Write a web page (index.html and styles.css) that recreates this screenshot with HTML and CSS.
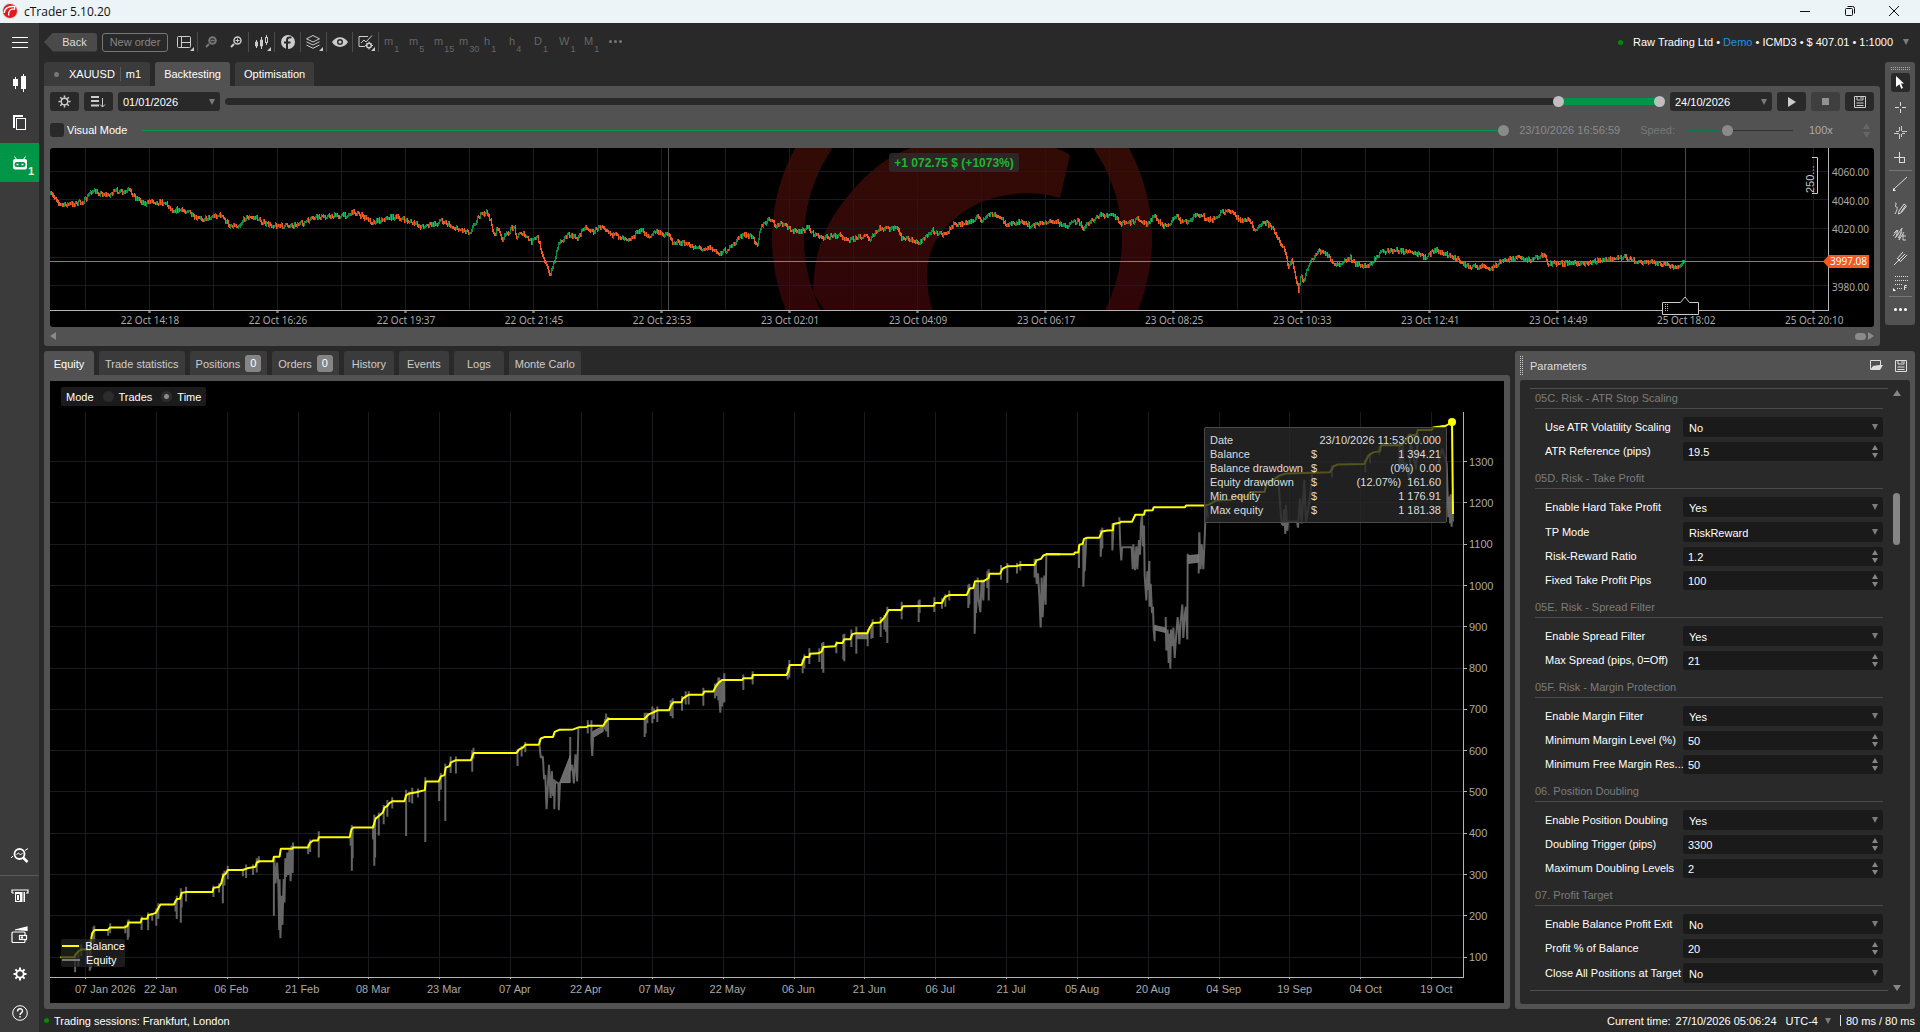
FILE: index.html
```html
<!DOCTYPE html>
<html lang="en">
<head>
<meta charset="utf-8">
<title>cTrader 5.10.20</title>
<link rel="stylesheet" href="styles.css">
</head>
<body>
<header class="titlebar">
  <svg class="logo" width="16" height="16" viewBox="0 0 16 16"><circle cx="8" cy="8" r="8" fill="#d9dcdd"/><circle cx="8" cy="8" r="7" fill="#e11b1b"/><path d="M2.2 10C2.4 5.4 6 3 12.8 3.600L12.500 6.200C8.500 5.500 6.300 7.500 6.600 12.500" fill="none" stroke="#fff" stroke-width="1.300"/></svg>
  <h1>cTrader 5.10.20</h1>
  <div class="window-buttons">
    <button aria-label="Minimise"><svg width="12" height="12" viewBox="0 0 12 12"><path d="M1 6.500H11" stroke="#111"/></svg></button>
    <button aria-label="Restore"><svg width="12" height="12" viewBox="0 0 12 12" fill="none" stroke="#111"><rect x="1.500" y="3.500" width="7" height="7" rx="1"/><path d="M3.500 1.500H8.500Q10.500 1.500 10.500 3.500V8.500"/></svg></button>
    <button aria-label="Close"><svg width="12" height="12" viewBox="0 0 12 12"><path d="M1 1L11 11M11 1L1 11" stroke="#111"/></svg></button>
  </div>
</header>
<div class="app">
  <nav class="sidebar">
    <button aria-label="Menu"><svg width="16" height="14" viewBox="0 0 16 14"><path d="M0 1.500H16M0 6.500H16M0 11.500H16" stroke="#fff"/></svg></button>
    <button aria-label="Trade"><svg width="14" height="18" viewBox="0 0 14 18" fill="#fff"><path d="M0 5H5V12H0zM2 3H3V15H2zM8 2H13V15H8zM10 0H11V18H10z"/></svg></button>
    <button aria-label="Copy"><svg width="14" height="16" viewBox="0 0 14 16" fill="none" stroke="#fff"><path d="M1 13V1H10" stroke-width="2"/><rect x="3.500" y="3.500" width="9" height="11"/></svg></button>
    <button class="active" aria-label="Algo"><svg width="14" height="14" viewBox="0 0 14 14"><path d="M1.500 .5L4 4M12.500 .5L10 4" stroke="#fff"/><rect y="3" width="14" height="10.500" rx="2" fill="#fff"/><rect x="1.500" y="6" width="11" height="5" rx="2.500" fill="#009547"/><path d="M3.500 8.500H5.500M8.500 8.500H10.500" stroke="#fff" stroke-width="1.500"/></svg><span class="count">1</span></button>
    <button class="push" aria-label="Analyze"><svg width="18" height="16" viewBox="0 0 18 16" fill="none" stroke="#fff"><circle cx="8.500" cy="7" r="5" stroke-width="1.800"/><path d="M12 10.500L16.500 15" stroke-width="2.500"/><path d="M5.500 7.500L7.500 6L9.500 8L11.500 6M2 9L0 11M14 3.500L17 1.500"/></svg></button>
    <hr>
    <button aria-label="Deposit"><svg width="18" height="14" viewBox="0 0 18 14"><path d="M1 4V1H17V4H15M1 4H3" fill="none" stroke="#fff" stroke-width="1.200"/><path d="M4 3H14V13H4z" fill="#fff"/><path d="M5.500 5.500H8.500V11.500H5.500zM12 3V13" fill="none" stroke="#3b3b3b"/></svg></button>
    <button aria-label="Wallet"><svg width="18" height="18" viewBox="0 0 18 18" fill="none" stroke="#fff" stroke-width="1.200"><path d="M4 4L16 1V5" fill="#fff"/><rect x="1" y="6" width="13" height="10.500" rx="1"/><rect x="8.500" y="9.500" width="7" height="4" fill="#3b3b3b"/><circle cx="11" cy="11.500" r=".6"/></svg></button>
    <button aria-label="Settings"><svg width="14" height="14" viewBox="-7 -7 14 14" fill="none" stroke="#fff"><circle r="3.700" stroke-width="1.800"/><path d="M0-6.500V-4M0 6.500V4M-6.500 0H-4M6.500 0H4M-4.600-4.600L-3-3M4.600 4.600L3 3M-4.600 4.600L-3 3M4.600-4.600L3-3" stroke-width="2"/></svg></button>
    <button aria-label="Help"><svg width="16" height="16" viewBox="0 0 16 16" fill="none" stroke="#fff"><circle cx="8" cy="8" r="7.300"/><path d="M5.500 6.500C5.500 3 10.500 3 10.500 6C10.500 8 8 7.800 8 10M8 11V12.500" stroke-width="1.400"/></svg></button>
  </nav>
  <div class="workspace">
    <div class="toolbar">
      <button class="back">Back</button>
      <button class="new-order">New order</button>
      <div class="tools">
        <button aria-label="Layout" class="more"><svg width="15" height="14" viewBox="0 0 15 14" fill="none" stroke="#ccc"><rect x=".5" y="1.500" width="13" height="11" rx="1"/><path d="M4.500 1V13M4.500 7.500H14"/></svg></button>
        <button aria-label="Zoom out" class="dim"><svg width="12" height="12" viewBox="0 0 12 12" stroke="#777" fill="none"><path d="M1 11L4 8" stroke-width="2"/><circle cx="7.500" cy="4.500" r="3.300" stroke-width="2"/><path d="M5.500 4.500H9.500" stroke-width="1.500"/></svg></button>
        <button aria-label="Zoom in" class="plain"><svg width="12" height="12" viewBox="0 0 12 12" stroke="#ccc" fill="none"><path d="M1 11L4 8" stroke-width="2"/><circle cx="7.500" cy="4.500" r="3.500" stroke-width="1.500"/><path d="M5.500 4.500H9.500M7.500 2.500V6.500"/></svg></button>
        <button aria-label="Chart type" class="more"><svg width="14" height="14" viewBox="0 0 14 14" fill="none" stroke="#ccc"><path d="M1.500 5V13M6.500 2V14M11.500 0V2M11.500 7V10"/><path d="M.5 7H2.500V11H.5zM5.500 5H7.500V11H5.500z" fill="#ccc"/><rect x="10.500" y="2.500" width="2" height="5"/></svg></button>
        <button aria-label="Indicators"><svg width="14" height="14" viewBox="0 0 14 14"><circle cx="7" cy="7" r="7" fill="#ccc"/><path d="M6 14V5.500C6 3 7 2 10.500 2.500M3 7.500H9.500" fill="none" stroke="#292929" stroke-width="2"/></svg></button>
        <button aria-label="Objects" class="more"><svg width="15" height="14" viewBox="0 0 15 14" fill="none" stroke="#ccc"><path d="M7 .5L13.500 3.800L7 7L.5 3.800zM.5 6.800L7 10L13.500 6.800M.5 10L7 13.300L13.500 10"/></svg></button>
        <button aria-label="Visibility"><svg width="16" height="10" viewBox="0 0 16 10"><path d="M0 5C4-1.500 12-1.500 16 5C12 11.500 4 11.500 0 5z" fill="#ccc"/><circle cx="8" cy="5" r="3" fill="#292929"/><circle cx="8" cy="5" r="1.600" fill="#ccc"/></svg></button>
        <button aria-label="Chart settings" class="more"><svg width="16" height="15" viewBox="0 0 16 15" fill="none" stroke="#ccc"><path d="M7 11.500H1V1.500H10M3 8L6 5L8 7L14 .5"/><circle cx="11" cy="10.500" r="2.300" stroke-width="1.500"/><path d="M11 6.500V8M11 13V14.500M7 10.500H8.500M13.500 10.500H15M8.500 8L9.500 9M13.500 8L12.500 9"/></svg></button>
      </div>
      <div class="frames">
        <button>m<sub>1</sub></button><button>m<sub>5</sub></button><button>m<sub>15</sub></button><button>m<sub>30</sub></button><button>h<sub>1</sub></button><button>h<sub>4</sub></button><button>D<sub>1</sub></button><button>W<sub>1</sub></button><button>M<sub>1</sub></button>
        <button aria-label="More periods" class="dots"><i></i><i></i><i></i></button>
      </div>
      <button class="account"><i class="live"></i><span>Raw Trading Ltd • <b>Demo</b> • ICMD3 • $ 407.01 • 1:1000</span><i class="caret"></i></button>
    </div>
    <div class="upper">
      <section class="backtest">
        <div class="tabs top-tabs">
          <button class="symbol"><i class="dot"></i>XAUUSD<i class="bar"></i>m1</button>
          <button class="selected">Backtesting</button>
          <button>Optimisation</button>
        </div>
        <div class="backtest-body">
          <div class="range-row">
            <button class="tool" aria-label="Backtest settings"><svg width="13" height="13" viewBox="-7 -7 14 14" fill="none" stroke="#ccc"><circle r="3.500" stroke-width="1.500"/><path d="M0-6.500V-4M0 6.500V4M-6.500 0H-4M6.500 0H4M-4.600-4.600L-3-3M4.600 4.600L3 3M-4.600 4.600L-3 3M4.600-4.600L3-3" stroke-width="1.700"/></svg></button>
            <button class="tool" aria-label="Events order"><svg width="15" height="12" viewBox="0 0 15 12" fill="none" stroke="#ccc"><path d="M0 1H8M0 5H8M0 9.500H8" stroke-width="2"/><path d="M11.500 2V11M9 8.500L11.500 11L14 8.500"/></svg></button>
            <div class="pick date"><select aria-label="Start date"><option>01/01/2026</option></select></div>
            <div class="period">
              <input type="range" aria-label="Period start" min="0" max="1000" value="929">
              <input type="range" aria-label="Period end" min="0" max="1000" value="1000">
            </div>
            <div class="pick date"><select aria-label="End date"><option>24/10/2026</option></select></div>
            <button class="tool" aria-label="Start"><svg width="8" height="10" viewBox="0 0 8 10"><path d="M0 0L8 5L0 10z" fill="#ccc"/></svg></button>
            <button class="tool off" aria-label="Stop" disabled><svg width="7" height="7"><rect width="7" height="7" fill="#929292"/></svg></button>
            <button class="tool" aria-label="Save"><svg width="12" height="12" viewBox="0 0 12 12" fill="none" stroke="#ccc"><path d="M.5.5H11.500V11.500H.5zM3 .5V4H9V.5M2.500 7H9.500M2.500 9.500H9.500"/><path d="M7 1V3"/></svg></button>
          </div>
          <div class="visual-row">
            <label class="check"><input type="checkbox">Visual Mode</label>
            <input class="progress" type="range" aria-label="Progress" min="0" max="100" value="100" disabled>
            <span class="stamp">23/10/2026 16:56:59</span>
            <label class="speed" for="speed">Speed:</label>
            <input class="speed-range" id="speed" type="range" min="0" max="100" value="38" disabled>
            <span class="times">100x</span>
            <span class="steps"></span>
          </div>
          <div class="price-chart">
            <svg class="price-plot" viewBox="50 148 1779 164" preserveAspectRatio="none">
              <defs>
                <linearGradient id="brand" gradientUnits="userSpaceOnUse" x1="0" y1="148" x2="0" y2="310"><stop offset="0" stop-color="#330b05"/><stop offset="1" stop-color="#2f0508"/></linearGradient>
                <clipPath id="plot"><rect x="50" y="148" width="1779" height="162"/></clipPath>
              </defs>
              <g clip-path="url(#plot)" fill="url(#brand)">
                <path fill-rule="evenodd" d="M772 239a190 190 0 1 0 380 0a190 190 0 1 0-380 0zM804 239a159 159 0 1 1 318 0a159 159 0 1 1-318 0z"/>
                <path d="M813 292C814 255 822 225 853 190C872 168 893 153 917 146C970 130 1030 132 1070 155L1060 198C1035 190 1005 193 984 201C945 218 927 245 927 275C927 288 929 299 933 311L830 320z"/>
              </g>
              <path id="price-grid" class="grid"/>
              <path d="M668.500 148V310M1685.500 148V310" class="marker-line"/>
              <path id="price-up" stroke="#0a8f43"/>
              <path id="price-down" stroke="#f15a22"/>
              <path d="M50 261.500H1829" stroke="#f15a22"/>
              <path id="price-axis" class="axis"/>
              <path d="M1662.500 302.500H1680.500L1685 297L1689.500 302.500H1698.500V314.500H1662.500z" fill="#000" stroke="#ccc"/>
              <path d="M1665.500 304V312M1667.500 304V312" stroke="#bbb" stroke-dasharray="1 1"/>
              <path d="M1812 157.500H1817.500V193.500H1812" fill="none" stroke="#ccc"/>
            </svg>
            <div class="price-scale"><span>4060.00</span><span>4040.00</span><span>4020.00</span><span></span><span>3980.00</span></div>
            <div class="price-dates"><span>22 Oct 14:18</span><span>22 Oct 16:26</span><span>22 Oct 19:37</span><span>22 Oct 21:45</span><span>22 Oct 23:53</span><span>23 Oct 02:01</span><span>23 Oct 04:09</span><span>23 Oct 06:17</span><span>23 Oct 08:25</span><span>23 Oct 10:33</span><span>23 Oct 12:41</span><span>23 Oct 14:49</span><span>25 Oct 18:02</span><span>25 Oct 20:10</span></div>
            <span class="profit">+1 072.75 $ (+1073%)</span>
            <span class="pips">250...</span>
            <span class="last-price">3997.08</span>
          </div>
          <div class="hscroll"><i class="left"></i><i class="thumb"></i><i class="right"></i></div>
        </div>
      </section>
      <aside class="drawing">
        <svg class="grip" width="19" height="4" viewBox="0 0 19 4"><path d="M0 .5H19M0 2.500H19" stroke="#aaa" stroke-dasharray="1 1"/></svg>
        <button class="on" aria-label="Cursor"><svg width="8" height="13" viewBox="0 0 8 13"><path d="M0 0L8 7.500H5L7 12L5.200 12.700L3.400 8.300L0 11z" fill="#fff"/></svg></button>
        <button aria-label="Crosshair"><svg width="11" height="11" viewBox="0 0 11 11"><path d="M5.500 0V4M5.500 7V11M0 5.500H4M7 5.500H11" stroke="#ddd"/></svg></button>
        <button aria-label="Sync crosshair"><svg width="13" height="13" viewBox="0 0 13 13"><path d="M5.500 1V5M7.500 0V5M5.500 8V13M7.500 8V11M0 7.500H5M2 5.500H5M8 5.500H13M8 7.500H11" stroke="#ccc"/></svg></button>
        <button aria-label="Zoom area"><svg width="12" height="12" viewBox="0 0 12 12" fill="none" stroke="#ddd"><path d="M5.500 0V5M0 5.500H5"/><rect x="5.500" y="5.500" width="5" height="5"/></svg></button>
        <hr>
        <button aria-label="Line"><svg width="15" height="15" viewBox="0 0 15 15"><path d="M1 13L14 1" stroke="#ddd"/><path d="M0 12V15H3z" fill="#fff"/></svg></button>
        <button aria-label="Freehand"><svg width="13" height="14" viewBox="0 0 13 14" fill="none" stroke="#ddd"><path d="M5 9L10 2L12.500 4L7.500 10.500L4.500 12zM1 1C4 1 0 4 2 5C4 5 4 6 1 12M7 10L11 4"/></svg></button>
        <button aria-label="Elliott"><svg width="14" height="14" viewBox="0 0 14 14" fill="none" stroke="#ccc"><path d="M0 9L5 3L3 10L9 1L6 13L11 5M2 11L6 6M10 7V13H13M9 9H13M1 6L4 3M5 11L9 5"/></svg></button>
        <button aria-label="Pitchfork"><svg width="13" height="14" viewBox="0 0 13 14" fill="none" stroke="#ddd"><path d="M0 13L11 2M3 7L9 0M6 10L13 3M3 6L7 10"/></svg></button>
        <button aria-label="Fibonacci"><svg width="15" height="15" viewBox="0 0 15 15"><path d="M2 .5H15M2 4.500H15M2 8.500H9M4 12.500H9" stroke="#ddd" stroke-dasharray="1 1"/><path d="M11.500 14V9.500H14M11.500 11.500H13.500" fill="none" stroke="#ddd"/><path d="M0 12V15H3z" fill="#fff"/></svg></button>
        <hr>
        <button class="dots" aria-label="More tools"><i></i><i></i><i></i></button>
      </aside>
    </div>
    <div class="lower">
      <section class="results">
        <div class="tabs">
          <button class="selected">Equity</button><button>Trade statistics</button><button>Positions<span class="badge">0</span></button><button>Orders<span class="badge">0</span></button><button>History</button><button>Events</button><button>Logs</button><button>Monte Carlo</button>
        </div>
        <div class="equity-chart">
          <svg class="equity-plot" viewBox="50 381 1414 598" preserveAspectRatio="none">
            <path id="equity-grid" class="grid"/>
            <path id="equity-axis" class="axis"/>
            <g class="equity-line">
              <path transform="translate(0 380) scale(.40816 .41595)" d="M184 1380V1424M192 1370V1410M199 1357V1385M214 1350V1400M220 1345V1420M222 1345V1415M229 1315V1355M231 1312V1350M265 1320V1336M270 1306V1330M307 1310V1330M313 1300V1346M315 1297V1340M347 1290V1322M363 1280V1323M373 1283V1300M383 1270V1312M388 1258V1295M430 1250V1278M433 1240V1296M443 1222V1305M445 1230V1268M456 1218V1254M523 1215V1243M537 1210V1232M546 1185V1258M550 1180V1215M558 1168V1200M595 1175V1193M603 1165V1197M620 1165V1190M629 1150V1184M634 1145V1162M671 1146V1288M672 1150L675 1210L679 1160L682 1215L684 1322L685 1200L687 1342L690 1240L692 1310L695 1200L697 1256L699 1150L701 1195L704 1136L706 1190L709 1130L712 1205L714 1120L717 1185L718 1112M755 1116V1140M760 1105V1135M781 1085V1148M859 1085V1120M862 1070V1180M864 1080V1150M914 1070V1105M917 1045V1168M919 1050V1148M928 1040V1095M940 1022V1068M949 1010V1050M961 1003V1030M995 985V1096M1003 990V1015M1010 980V1018M1024 982V1004M1042 955V1111M1076 962V1012M1080 945V985M1091 922V1060M1104 905V945M1117 905V946M1157 890V942M1160 884V910M1268 888V928M1278 880V905M1287 870V895M1322 862V880L1325 908L1330 905L1333 960L1336 950L1339 1032L1341 1000L1345 925L1349 1005L1352 940L1355 1000L1358 960V1032L1360 965L1368 970L1369 1034L1372 968M1397 858V940L1402 925L1406 970L1410 900L1414 965L1417 838M1440 818V850M1449 818V870L1451 904L1453 860M1482 815V840M1485 802V845L1490 810V858"/>
              <path class="filled" transform="translate(0 380) scale(.40816 .41595)" d="M1371 968L1397 903V968zM1452 845L1478 832V845L1452 860z"/>
              <path transform="translate(600 380) scale(.33333 .41595)" d="M134 800V858M137 800V850M142 800V825M157 785V825M162 790V815M172 785V822M212 770V808M218 765V813M246 760V795M257 748V780M266 748V780M310 740V783M345 730V765M350 728V760M355 715V770M358 715V765L361 800L364 722L366 785L368 725L370 775L373 705V775M430 708V745M458 700V732M563 690V720M568 673V715M608 670V705M613 660V693M628 645V683M658 645V678M666 632V695M670 630V704M709 628V657M730 612V672M733 610V676M754 600V642M769 593V658M803 600V640M814 590V622M818 575V620M842 570V618M853 565V600M858 560V605M862 545V632M905 533V575M956 530V582M959 528V560M1003 522V558M1026 525V550M1036 515V545M1048 506V530M1105 492V548M1108 490V540M1124 490V610L1128 490V560L1133 475L1136 530L1141 558L1145 480L1150 530L1152 480M1162 460V500M1166 455V530M1203 445V480M1222 440V488M1251 440V465M1261 435V458M1304 430V475L1307 430L1310 490L1314 465L1318 520L1322 595L1325 475L1328 570L1333 470L1337 540L1339 422"/>
              <path class="filled" transform="translate(600 380) scale(.33333 .41595)" d="M770 612H803V622H770z"/>
              <path transform="translate(1040 380) scale(.33333 .41595)" d="M117 400V452M130 390V497L134 395V460L139 378M182 360V425L187 355V405M217 345V410L221 346M238 330L241 400L244 434L246 402H275L278 455L280 395L285 457L289 400L292 455L297 385L300 420L303 345L306 325L309 400L312 350L314 470L319 530L322 460L324 505L328 435L329 545L332 490L336 560L339 545L341 600L344 628V590M377 570L379 650L383 600L386 680L388 610L391 694L393 600L398 640L400 595L404 668L408 620L413 570L416 600L418 635L422 580L427 540L430 620L435 560L438 545L442 624L443 418M476 465L478 366L482 455L485 395L490 455L493 400L498 300L504 330M715 235L720 300L725 345L730 350L732 310L736 370L738 300L742 362L744 340H771L774 355L780 285L785 345L793 240L798 340L805 310L810 280L818 220M876 205V235M976 190V222M990 175V200M1018 160V180M1078 160V220L1088 160L1090 205L1098 200L1108 240L1112 150L1128 215L1134 130M1195 200L1206 165L1212 180L1220 200L1225 330L1228 280L1230 345L1232 275L1235 353L1237 290L1239 340"/>
              <path class="filled" transform="translate(1040 380) scale(.33333 .41595)" d="M345 590L376 596V607L345 601zM445 422L475 420V438L445 441z"/>
            </g>
            <g class="balance-line">
              <polyline transform="translate(0 380) scale(.40816 .41595)" points="148,1388 182,1388 186,1380 192,1374 200,1369 222,1369 224,1340 226,1330 232,1322 264,1322 270,1316 305,1316 312,1313 315,1304 345,1304 347,1295 361,1295 363,1287 373,1284 382,1281 388,1270 393,1261 426,1261 433,1248 441,1247 445,1233 456,1231 521,1231 523,1221 536,1219 542,1210 547,1191 553,1187 558,1178 595,1178 606,1174 626,1170 629,1160 635,1157 669,1157 671,1146 685,1146 688,1127 716,1127 718,1124 755,1124 759,1113 767,1107 779,1107 781,1099 857,1099 861,1080 866,1076 914,1076 920,1055 931,1046 938,1040 942,1028 949,1024 954,1017 961,1013 991,1013 995,998 1003,994 1020,991 1041,986 1043,965 1075,965 1080,953 1089,950 1092,932 1102,928 1104,920 1117,914 1154,914 1160,897 1265,897 1272,888 1281,884 1287,877 1320,877 1325,862 1335,858 1355,858 1359,846 1370,841 1404,840 1418,835 1438,834 1441,831 1478,831 1483,823 1490,815 1498,815"/>
              <polyline transform="translate(600 380) scale(.33333 .41595)" points="24,815 133,815 146,804 160,799 173,794 207,794 213,782 220,775 244,775 248,766 259,760 266,757 308,757 313,749 340,749 347,737 357,727 367,721 427,721 430,717 457,717 458,709 560,709 565,700 569,685 605,685 614,666 628,666 630,658 655,657 665,653 670,642 705,640 711,632 728,632 733,623 751,623 757,611 768,609 802,609 808,597 818,584 840,583 854,570 866,553 904,553 908,544 1002,543 1004,536 1026,536 1034,522 1047,517 1100,517 1109,501 1120,500 1125,484 1150,484 1166,476 1168,466 1200,466 1207,454 1222,448 1250,447 1262,445 1303,445 1310,433 1323,430 1330,422 1340,419 1380,419"/>
              <polyline transform="translate(1040 380) scale(.33333 .41595)" points="18,419 102,419 104,415 115,415 118,396 128,394 132,382 142,379 178,379 186,364 202,362 219,361 220,346 240,343 242,341 276,341 286,324 312,324 315,314 338,313 341,306 435,306 438,302 495,302 508,299 527,290 575,288 578,282 622,280 630,269 674,269 680,247 690,245 718,230 737,225 870,222 880,208 893,203 973,202 985,182 1000,174 1020,171 1023,157 1085,157 1108,132 1130,132 1133,120 1175,120 1180,114 1200,112 1218,110 1236,101 1239,322"/>
            </g>
            <circle cx="1452" cy="422" r="4" fill="#ff0"/>
          </svg>
          <div class="equity-scale"><span>1300</span><span>1200</span><span>1100</span><span>1000</span><span>900</span><span>800</span><span>700</span><span>600</span><span>500</span><span>400</span><span>300</span><span>200</span><span>100</span></div>
          <div class="equity-dates"><span>07 Jan 2026</span><span>22 Jan</span><span>06 Feb</span><span>21 Feb</span><span>08 Mar</span><span>23 Mar</span><span>07 Apr</span><span>22 Apr</span><span>07 May</span><span>22 May</span><span>06 Jun</span><span>21 Jun</span><span>06 Jul</span><span>21 Jul</span><span>05 Aug</span><span>20 Aug</span><span>04 Sep</span><span>19 Sep</span><span>04 Oct</span><span>19 Oct</span></div>
          <div class="mode"><span>Mode</span><label><input type="radio" name="mode">Trades</label><label><input type="radio" name="mode" checked>Time</label></div>
          <div class="legend"><span class="balance">Balance</span><span class="equity">Equity</span></div>
          <table class="tooltip">
            <tr><th>Date</th><td></td><td>23/10/2026 11:53:00.000</td></tr>
            <tr><th>Balance</th><td>$</td><td>1 394.21</td></tr>
            <tr><th>Balance drawdown</th><td>$</td><td>(0%)&nbsp; 0.00</td></tr>
            <tr><th>Equity drawdown</th><td>$</td><td>(12.07%)&nbsp; 161.60</td></tr>
            <tr><th>Min equity</th><td>$</td><td>1 176.91</td></tr>
            <tr><th>Max equity</th><td>$</td><td>1 181.38</td></tr>
          </table>
        </div>
      </section>
      <section class="params">
        <header><svg class="grip" width="4" height="19" viewBox="0 0 4 19"><path d="M.5 0V19M2.500 0V19" stroke="#ccc" stroke-dasharray="1 1"/></svg><h2>Parameters</h2>
          <button aria-label="Load"><svg width="13" height="11" viewBox="0 0 13 11"><path d="M.5 9V.5H10.500V5" fill="none" stroke="#ddd"/><path d="M0 10L3 6L9 5H13L10 10z" fill="#ddd"/></svg></button>
          <button aria-label="Save"><svg width="12" height="12" viewBox="0 0 12 12" fill="none" stroke="#ddd"><path d="M.5.5H11.500V11.500H.5zM3 .5V4H9V.5M2.500 7H9.500M2.500 9.500H9.500"/><path d="M7 1V3"/></svg></button>
        </header>
        <div class="params-body">
          <form class="fields">
            <h3>05C. Risk - ATR Stop Scaling</h3>
            <label for="p1">Use ATR Volatility Scaling</label><div class="pick"><select id="p1"><option>No</option></select></div>
            <label for="p2">ATR Reference (pips)</label><div class="spin"><input id="p2" value="19.5"></div>
            <h3>05D. Risk - Take Profit</h3>
            <label for="p3">Enable Hard Take Profit</label><div class="pick"><select id="p3"><option>Yes</option></select></div>
            <label for="p4">TP Mode</label><div class="pick"><select id="p4"><option>RiskReward</option></select></div>
            <label for="p5">Risk-Reward Ratio</label><div class="spin"><input id="p5" value="1.2"></div>
            <label for="p6">Fixed Take Profit Pips</label><div class="spin"><input id="p6" value="100"></div>
            <h3>05E. Risk - Spread Filter</h3>
            <label for="p7">Enable Spread Filter</label><div class="pick"><select id="p7"><option>Yes</option></select></div>
            <label for="p8">Max Spread (pips, 0=Off)</label><div class="spin"><input id="p8" value="21"></div>
            <h3>05F. Risk - Margin Protection</h3>
            <label for="p9">Enable Margin Filter</label><div class="pick"><select id="p9"><option>Yes</option></select></div>
            <label for="p10">Minimum Margin Level (%)</label><div class="spin"><input id="p10" value="50"></div>
            <label for="p11">Minimum Free Margin Res...</label><div class="spin"><input id="p11" value="50"></div>
            <h3>06. Position Doubling</h3>
            <label for="p12">Enable Position Doubling</label><div class="pick"><select id="p12"><option>Yes</option></select></div>
            <label for="p13">Doubling Trigger (pips)</label><div class="spin"><input id="p13" value="3300"></div>
            <label for="p14">Maximum Doubling Levels</label><div class="spin"><input id="p14" value="2"></div>
            <h3>07. Profit Target</h3>
            <label for="p15">Enable Balance Profit Exit</label><div class="pick"><select id="p15"><option>No</option></select></div>
            <label for="p16">Profit % of Balance</label><div class="spin"><input id="p16" value="20"></div>
            <label for="p17">Close All Positions at Target</label><div class="pick"><select id="p17"><option>No</option></select></div>
          </form>
          <div class="vscroll"><i class="up"></i><i class="thumb"></i><i class="down"></i></div>
        </div>
      </section>
    </div>
    <footer class="status">
      <i class="live"></i><span class="sessions">Trading sessions: Frankfurt, London</span>
      <span>Current time:</span><span class="clock">27/10/2026 05:06:24</span><button class="zone">UTC-4<i class="caret"></i></button><span class="ping"><i></i>80 ms / 80 ms</span>
    </footer>
  </div>
</div>
<script src="charts.js"></script>
</body>
</html>
```
FILE: styles.css
```css
* { box-sizing: border-box; }
body {
  margin: 0;
  height: 100vh;
  display: flex;
  flex-direction: column;
  overflow: hidden;
  background: #292929;
  color: #fff;
  font: 11px/16px "Liberation Sans", Arial, sans-serif;
}
button, input, select {
  margin: 0;
  padding: 0;
  border: 0;
  background: none;
  color: inherit;
  font: inherit;
}
button { display: flex; align-items: center; justify-content: center; white-space: nowrap; }
h1, h2, h3 { margin: 0; font-size: 11px; font-weight: 400; }
svg, i { display: block; flex: none; }

/* Window title bar */
.titlebar { height: 23px; flex: none; display: flex; align-items: center; padding: 0 10px 0 2px; gap: 6px; background: #ecf4f8; color: #111; }
.titlebar h1 { font: 12px/20px "Open Sans", "Noto Sans", sans-serif; }
.titlebar .logo { margin-bottom: 2px; }
.window-buttons { display: flex; margin: 0 0 2px auto; }
.window-buttons button { width: 45px; }
.window-buttons button:last-child { width: 32px; margin-left: 6px; }

.app { flex: 1; min-height: 0; display: flex; }

/* Left navigation */
.sidebar { width: 39px; flex: none; display: flex; flex-direction: column; gap: 1px; background: #3b3b3b; }
.sidebar button { height: 39px; flex: none; position: relative; }
.sidebar button.active { background: #009547; }
.sidebar .push, .sidebar .push ~ button { height: 38px; }
.sidebar .push { margin-top: auto; }
.sidebar hr { width: 100%; margin: 0; border: 0; border-top: 1px solid #595959; }
.count { position: absolute; right: 5px; bottom: 3px; font-weight: 700; color: #f4ecc8; }

.workspace { flex: 1; min-width: 0; display: flex; flex-direction: column; padding-left: 5px; }

/* Toolbar */
.toolbar { height: 39px; flex: none; display: flex; align-items: center; padding: 0 11px 1px 0; }
.back { width: 53px; height: 19px; padding-left: 8px; background: #4a4a4a; border-radius: 3px; clip-path: polygon(0 50%, 9px 0, 100% 0, 100% 100%, 9px 100%); color: #ddd; }
.new-order { width: 66px; height: 19px; margin-left: 5px; border: 1px solid #777; border-radius: 3px; color: #858585; }
.tools { display: flex; margin-left: 3px; }
.tools button { width: 26px; height: 20px; position: relative; border-left: 1px solid #4c4c4c; }
.tools button:nth-child(n+3) { width: 26px; }
.tools .plain { margin-right: -1px; }
.tools button:first-child, .tools .plain { border-left: 0; }
.tools .more::after { content: ""; position: absolute; right: 3px; bottom: 1px; border: 2px solid; border-color: transparent #ccc #ccc transparent; }
.frames { display: flex; border-left: 1px solid #4c4c4c; padding-left: 5px; color: #666; }
.frames button { width: 25px; height: 20px; justify-content: flex-start; padding-bottom: 2px; }
.frames sub { font-size: 9px; line-height: 10px; align-self: flex-end; margin: 0 0 -4px 1px; }
.dots { gap: 2px; }
.dots i { width: 3px; height: 3px; border-radius: 50%; background: #fff; }
.frames .dots i { background: #777; }
.account { margin-left: auto; gap: 10px; }
.account b { font-weight: 400; color: #1e90e6; }
.live { width: 5px; height: 5px; border-radius: 50%; background: #008a00; }
.caret, .pick::after { border: 3px solid transparent; border-top: 6px solid #7c7c7c; border-bottom: 0; }

/* Tabs */
.tabs { display: flex; gap: 5px; height: 24px; }
.tabs button { min-width: 50px; padding: 0 6px; background: #3b3b3b; border-radius: 3px 3px 0 0; color: #ccc; }
.tabs .selected { background: #525252; color: #fff; }
.top-tabs button { padding: 0 9px; color: #fff; }
.symbol .dot { width: 5px; height: 5px; border-radius: 50%; background: #777; margin: 0 10px 0 1px; }
.symbol .bar { width: 1px; height: 14px; background: #5a5a5a; margin: 0 5px; }
.badge { width: 16px; height: 17px; margin-left: 5px; border-radius: 3px; background: #858585; color: #fff; }

/* Backtesting panel */
.upper { display: flex; gap: 5px; padding-right: 5px; flex: none; align-items: flex-start; }
.backtest { flex: 1; min-width: 0; }
.backtest-body { background: #525252; padding: 6px 6px 0; border-radius: 0 3px 3px 3px; }
.range-row { display: flex; gap: 5px; height: 19px; }
.tool { width: 29px; background: #292929; border-radius: 3px; }
.tool.off { background: #3f3f3f; }
.pick { position: relative; background: #292929; border-radius: 3px; }
.pick::after, .spin::before, .spin::after { content: ""; position: absolute; right: 5px; top: 7px; pointer-events: none; }
.pick select { display: block; width: 100%; height: 100%; padding: 1px 12px 0 5px; appearance: none; }
.date { width: 102px; }
input[type=range] { appearance: none; background: none; outline: 0; height: 12px; }
input[type=range]::-webkit-slider-thumb { appearance: none; width: 11px; height: 11px; border-radius: 50%; background: #bfbfbf; }
.period { flex: 1; display: grid; align-items: center; position: relative; }
.period::before { content: ""; grid-area: 1 / 1; height: 7px; border-radius: 4px; background: linear-gradient(90deg, #292929 92.5%, #009547 92.5%); }
.period input { grid-area: 1 / 1; width: 100%; pointer-events: none; }
.period input::-webkit-slider-thumb { pointer-events: auto; }
.visual-row { display: flex; align-items: center; height: 14px; margin: 12px 0 11px; color: #8a8a8a; }
.check { display: flex; align-items: center; gap: 3px; color: #fff; margin-right: 15px; }
.check input { appearance: none; width: 14px; height: 14px; border-radius: 3px; background: #292929; }
.progress { flex: 1; }
.progress::-webkit-slider-runnable-track { background: linear-gradient(#009547, #009547) center / 100% 1px no-repeat; }
.visual-row input::-webkit-slider-thumb { background: #8a8a8a; }
.stamp { margin-left: 10px; white-space: nowrap; }
.speed { margin-left: 20px; color: #777; }
.speed-range { width: 108px; margin: 0 16px 0 10px; }
.speed-range::-webkit-slider-runnable-track { background: linear-gradient(90deg, #197444 38%, #333 38%) center / 100% 1px no-repeat; }
.times { width: 54px; color: #aaa; }
.steps { position: relative; width: 7px; height: 13px; margin-right: 4px; }
.steps::before, .steps::after { content: ""; display: block; border: 3px solid transparent; border-bottom: 5px solid #666; border-top: 0; }
.steps::after { border-top: 5px solid #666; border-bottom: 0; margin-top: 3px; }

/* Price chart */
.price-chart { position: relative; display: grid; grid-template: 164px 15px / 1fr 45px; background: #000; border-radius: 3px; overflow: hidden; font: 10px/16px "Noto Sans", "Open Sans", sans-serif; color: #aaa; }
.price-plot, .equity-plot { width: 100%; height: 100%; overflow: visible; }
.grid { stroke: #1b1b1f; fill: none; }
.axis { stroke: #b4b4b4; fill: none; }
.marker-line { stroke: #4a4a4a; fill: none; }
.price-scale { display: grid; grid-template-rows: repeat(5, 1fr); height: 143px; margin-top: 10px; align-items: center; padding-left: 3px; }
.price-dates { grid-column: 1 / 3; display: flex; margin-left: 36px; white-space: nowrap; }
.price-dates span { flex: 0 0 7.16%; text-align: center; }
.profit { position: absolute; left: 46%; top: 5px; height: 19px; width: 130px; border-radius: 3px; background: rgba(45, 45, 45, .8); color: #1fb433; font: 700 12px/20px "Liberation Sans", Arial, sans-serif; text-align: center; }
.pips { position: absolute; right: 57px; top: 13px; height: 32px; writing-mode: vertical-rl; rotate: 180deg; color: #ccc; font: 11px/14px "Liberation Sans", Arial, sans-serif; }
.last-price { position: absolute; right: 5px; top: 107px; width: 46px; padding-left: 7px; height: 13px; line-height: 13px; background: #f15a22; color: #fff; clip-path: polygon(0 50%, 6px 0, 100% 0, 100% 100%, 6px 100%); }
.hscroll { display: flex; align-items: center; height: 19px; padding-bottom: 1px; }
.hscroll i { border: 4px solid transparent; }
.hscroll .left { border-right: 6px solid #8a8a8a; border-left: 0; }
.hscroll .thumb { margin: 0 2px 0 auto; width: 11px; height: 7px; border: 0; border-radius: 4px; background: #8a8a8a; }
.hscroll .right { border-left: 6px solid #8a8a8a; border-right: 0; }

/* Drawing tools */
.drawing { width: 30px; height: 263px; padding: 5px 3px 0; background: #525252; border-radius: 3px; display: flex; flex-direction: column; align-items: center; }
.drawing button { width: 19px; height: 25px; }
.drawing .on { height: 19px; margin: 2px 0 3px; border-radius: 3px; background: #292929; }
.drawing hr { width: 23px; margin: 0; border: 0; border-top: 1px solid #777; }

/* Results and parameters */
.lower { flex: 1; min-height: 0; display: flex; gap: 5px; padding: 5px 5px 0 0; }
.results { flex: 1; min-width: 0; display: flex; flex-direction: column; }
.results .tabs button { padding-top: 1px; }
.equity-chart { flex: 1; min-height: 0; position: relative; display: grid; grid-template: minmax(0, 1fr) 24px / minmax(0, 1fr) 40px; border: 6px solid #525252; border-radius: 0 3px 3px 3px; background: #000; }
.equity-scale { display: grid; grid-template-rows: repeat(13, 1fr); padding: 60px 0 1px 5px; align-items: center; color: #aaa; }
.equity-dates { grid-column: 1 / 3; display: flex; padding: 2px 0 0 25px; white-space: nowrap; color: #aaa; }
.equity-dates span { flex: 1; min-width: 0; text-align: center; }
.equity-dates span:first-child { flex: 0 0 50px; text-align: left; }
.equity-dates::after { content: ""; flex: 0 0 32px; }
.equity-line path { fill: none; stroke: #858585; stroke-opacity: .75; stroke-width: 2; vector-effect: non-scaling-stroke; stroke-linejoin: bevel; }
.equity-line .filled { fill: #6c6c6c; stroke-width: 1; }
.balance-line polyline { fill: none; stroke: #ff0; stroke-width: 2; vector-effect: non-scaling-stroke; stroke-linejoin: bevel; }
.mode { position: absolute; left: 11px; top: 6px; height: 19px; padding: 0 5px; display: flex; align-items: center; gap: 9px; background: #1b1b1b; border-radius: 2px; }
.mode label { display: flex; align-items: center; gap: 5px; }
.mode input { appearance: none; width: 11px; height: 11px; border-radius: 50%; background: #2c2c2c; }
.mode input:checked { background: radial-gradient(#8a8a8a 2px, #2c2c2c 3px); }
.legend { position: absolute; left: 11px; bottom: 36px; width: 64px; height: 28px; display: flex; flex-direction: column; background: rgba(36, 36, 36, .75); border-radius: 2px; line-height: 14px; }
.legend span { display: flex; align-items: center; gap: 6px; padding-left: 1px; }
.legend span::before { content: ""; width: 18px; height: 2px; background: #ff0; }
.legend .equity::before { background: #777; }
.tooltip { position: absolute; right: 57px; top: 46px; width: 243px; height: 96px; padding: 5px 5px; border: 1px solid #4a4a4a; border-radius: 2px; border-spacing: 0; background: rgba(40, 40, 40, .8); color: #ddd; line-height: 14px; }
.tooltip th, .tooltip td { padding: 0; font-weight: 400; text-align: left; white-space: nowrap; }
.tooltip th { width: 101px; }
.tooltip td:last-child { text-align: right; }

.params { width: 400px; flex: none; display: flex; flex-direction: column; padding: 0 5px 5px; background: #525252; border-radius: 3px; }
.params header { height: 29px; display: flex; align-items: center; gap: 12px; padding-right: 3px; }
.params h2 { flex: 1; color: #ddd; }
.params .grip { margin-right: -6px; }
.params-body { flex: 1; min-height: 0; display: flex; gap: 5px; padding: 8px 10px 13px 10px; background: #292929; border-radius: 3px; }
.fields { flex: 1; display: grid; grid-template-columns: 148px 1fr; align-content: start; row-gap: 5px; padding: 0 5px; border: solid #4f4f4f; border-width: 1px 0; }
.fields label { padding-left: 10px; line-height: 19px; white-space: nowrap; align-self: end; }
.fields h3 { grid-column: 1 / 3; margin: 4px 0 3px; padding-bottom: 2px; border-bottom: 1px solid #4a4a4a; color: #7c7c7c; }
.fields h3:first-child { margin-top: 1px; }
.fields .pick, .spin { position: relative; height: 20px; background: #1a1a1a; border-radius: 3px; }
.fields .spin { height: 19px; }
.fields .pick select { padding-left: 6px; }
.spin input { width: 100%; height: 100%; padding: 1px 12px 0 5px; }
.spin::before { top: 3px; border: 3px solid transparent; border-bottom: 5px solid #858585; border-top: 0; }
.spin::after { top: 11px; border: 3px solid transparent; border-top: 5px solid #858585; border-bottom: 0; }
.vscroll { width: 7px; display: flex; flex-direction: column; align-items: center; padding-top: 2px; }
.vscroll .up { border: 4px solid transparent; border-bottom: 6px solid #858585; border-top: 0; }
.vscroll .thumb { width: 7px; height: 52px; margin-top: 97px; border-radius: 4px; background: #858585; }
.vscroll .down { margin-top: auto; border: 4px solid transparent; border-top: 6px solid #858585; border-bottom: 0; }

/* Status bar */
.status { height: 23px; flex: none; display: flex; align-items: center; gap: 5px; padding-right: 5px; white-space: nowrap; }
.sessions { flex: 1; }
.zone { margin-left: 4px; gap: 7px; }
.ping { display: flex; align-items: center; gap: 5px; margin-left: 4px; }
.ping i { width: 1px; height: 11px; background: #ddd; }
```
FILE: charts.js
```js
const set = (id, d) => document.getElementById(id).setAttribute('d', d);

// Grids and axes
let grid = '', axis = 'M50 310.5H1829M1828.5 148V310';
for (let x = 85, i = 0; x < 1829; x += 64, i++) {
  grid += `M${x + 0.5} 148V310`;
  if (i % 2) axis += `M${x} 310v3M${x + 1} 310v3`;
}
[171, 199, 228, 257, 285].forEach(y => { grid += `M50 ${y + 0.5}H1828`; });
set('price-grid', grid);
set('price-axis', axis);

grid = '';
axis = 'M50 977.5H1464M1463.500 412V977';
for (let i = 0; i < 20; i++) {
  const x = Math.round(85 + i * 70.85) + 0.5;
  grid += `M${x} 412V977`;
  axis += `M${x} 977v2`;
}
for (let i = 0; i < 13; i++) {
  const y = Math.floor(461.5 + i * 41.3) + 0.5;
  grid += `M50 ${y}H1463`;
  axis += `M1464 ${y}h3`;
}
set('equity-grid', grid);
set('equity-axis', axis);

// Price path anchors: [time, price offset]
const anchors = [122,162,135,172,147,195,165,192,180,190,197,187,210,178,220,153,240,157,262,165,288,150,300,160,315,150,330,170,345,182,357,192,368,180,385,187,403,186,420,208,440,210,460,212,475,235,500,235,520,228,540,225,560,255,585,255,600,232,625,232,650,252,690,258,740,250,770,232,800,228,850,225,865,213,910,245,960,230,980,235,1000,243,1030,258,1070,250,1080,238,1110,262,1150,275,1170,230,1193,215,1210,285,1218,262,1228,298,1258,258,1265,290,1275,275,1300,305,1315,290,1325,330,1345,405,1355,370,1368,305,1390,285,1415,293,1430,258,1450,275,1475,255,1500,285,1545,295,1568,268,
1578,280,1593,290,1606,270,1618,283,1638,280,1643,303,1668,308,1698,318,1718,325,1738,322,1758,340,1778,330,1793,318,1813,285,1838,288,1855,310,1861,262,1873,250,1886,235,1898,258,1913,250,1938,268,1958,278,1978,260,1993,283,2018,292,2053,285,2083,298,2118,285,2130,300,2153,265,2198,265,2208,295,2228,298,2248,307,2268,290,2283,270,2313,285,2333,255,2368,248,2393,232,2408,240,2425,220,2453,235,2468,255,2493,245,2528,258,2558,245,2588,245,2613,258,2638,242,2653,262,2668,245,2693,225,2728,225,2743,250,2768,248,2788,235,2808,250,2826,228,2848,258,2868,245,2880,225,2893,245,2918,240,2930,220,2968,240,2993,215,3018,215,3038,240,3058,240,3076,275,3093,240,3113,260,3128,290,3136,310,
3144,320,3156,385,3163,360,3181,455,3186,395,3193,430,3201,385,3216,355,3228,330,3251,345,3271,378,3286,372,3306,350,3321,372,3351,378,3366,355,3386,333,3426,330,3461,340,3494,352,3514,328,3536,340,3566,355,3601,382,3631,375,3649,388,3681,360,3716,352,3746,358,3781,343,3794,372,3826,368,3866,370,3916,362,3976,350,4016,367,4066,368,4101,383,4116,378,4126,360];
let seed = 7;
const rnd = () => (seed = (seed * 16807) % 2147483647) / 2147483647;
let up = '', down = '', k = 0, last = anchors[1];
for (let x = 50; x < 1685; x++) {
  const t = x * 2.45;
  while (k + 4 < anchors.length && anchors[k + 2] < t) k += 2;
  const f = (t - anchors[k]) / (anchors[k + 2] - anchors[k]);
  const y = anchors[k + 1] + (anchors[k + 3] - anchors[k + 1]) * f + (rnd() - 0.5) * 13;
  const hi = Math.floor(140 + (Math.min(y, last) - 3 * rnd()) / 3);
  const lo = Math.ceil(140 + (Math.max(y, last) + 2 + 3 * rnd()) / 3);
  const bar = `M${x + 0.5} ${hi}V${lo}`;
  if (y < last) up += bar; else down += bar;
  last = y;
}
set('price-up', up);
set('price-down', down);
```
